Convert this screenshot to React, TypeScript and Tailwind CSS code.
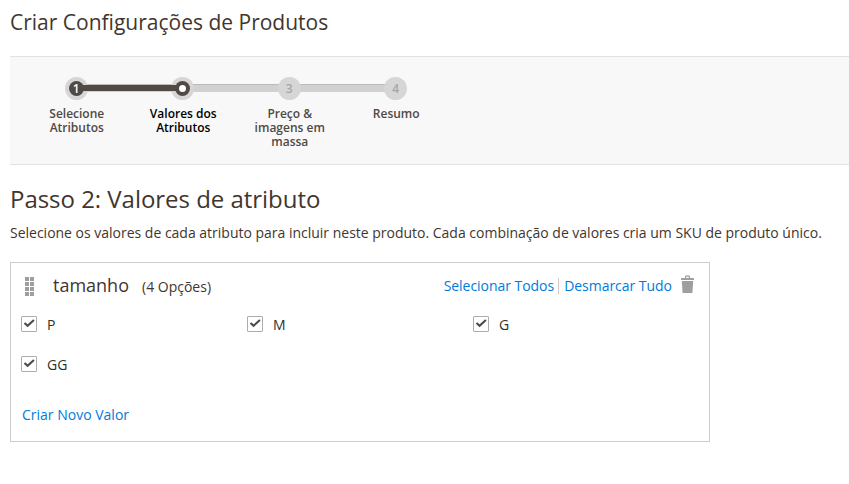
import React from 'react';

type Step = { label: string; state: 'done' | 'active' | 'todo' };

const steps: Step[] = [
  { label: 'Selecione Atributos', state: 'done' },
  { label: 'Valores dos Atributos', state: 'active' },
  { label: 'Preço & imagens em massa', state: 'todo' },
  { label: 'Resumo', state: 'todo' },
];

function StepItem({ step, index }: { step: Step; index: number }) {
  const todo = step.state === 'todo';
  return (
    <li className="relative flex w-[106.5px] flex-col items-center">
      {index > 0 && (
        <span className="absolute top-[7px] right-1/2 h-2 w-full border-t border-[#bbbbbb] bg-[#d1d1d1]" />
      )}
      <span className="relative z-10 flex size-[23px] items-center justify-center rounded-full bg-[#d6d6d6]">
        {todo ? (
          <span className="text-xs leading-none font-semibold text-[#a6a6a6]">{index + 1}</span>
        ) : (
          <span className="flex size-[15px] items-center justify-center rounded-full bg-[#514943] text-xs leading-none font-semibold text-white">
            {step.state === 'done' ? index + 1 : <span className="size-[7px] rounded-full bg-white" />}
          </span>
        )}
      </span>
      {step.state === 'active' && (
        <span className="absolute top-2 right-[60px] z-20 h-1.5 w-[93px] bg-[#514943]" />
      )}
      <span
        className={`mt-[7px] ml-px w-[80px] text-center text-xs leading-[14px] font-semibold ${
          step.state === 'active' ? 'text-black' : 'text-[#514943]'
        }`}
      >
        {step.label}
      </span>
    </li>
  );
}

function Option({ label }: { label: string }) {
  return (
    <label className="flex h-4 w-[226px] items-center">
      <span className="flex size-4 items-center justify-center rounded-[1px] border border-[#adadad] bg-white">
        <svg width="12" height="10" viewBox="0 0 12 10" fill="none">
          <path d="M1.5 3.9 4.6 6.8 10.9 1" stroke="#514943" strokeWidth="2.1" />
        </svg>
      </span>
      <span className="mt-px ml-[10px] text-sm leading-none text-[#303030]">{label}</span>
    </label>
  );
}

export default function App() {
  return (
    <main className="h-[484px] overflow-hidden bg-white pl-[10px] font-['Open_Sans',sans-serif] text-[#41362f]">
      <h1 className="pt-[7px] text-[21px] leading-[30px]">Criar Configurações de Produtos</h1>

      <nav className="mt-[19px] h-[109px] border-y border-[#e3e3e3] bg-[#f8f8f8] pt-5 pl-[13px]">
        <ol className="flex">
          {steps.map((step, i) => (
            <StepItem key={step.label} step={step} index={i} />
          ))}
        </ol>
      </nav>

      <h2 className="mt-[18px] text-2xl leading-8 tracking-[-0.03px]">Passo 2: Valores de atributo</h2>
      <p className="mt-2 text-sm leading-5 tracking-[-0.008px] whitespace-nowrap">
        Selecione os valores de cada atributo para incluir neste produto. Cada combinação de valores cria um SKU de produto único.
      </p>

      <section className="mt-[19px] h-[180px] w-[700px] border border-[#cccccc] pl-[10px]">
        <header className="flex h-[46px] items-center">
          <div className="ml-1 grid grid-cols-[4px_4px] gap-px">
            {Array.from({ length: 8 }, (_, i) => (
              <span key={i} className="size-1 bg-[#9e9e9e]" />
            ))}
          </div>
          <span className="-mt-0.5 ml-[19px] text-lg leading-none">tamanho</span>
          <span className="mt-px ml-[13px] text-sm leading-none">(4 Opções)</span>
          <div className="mr-[15px] ml-auto flex items-center text-sm leading-none text-[#007bdb]">
            <a className="tracking-[-0.04px]">Selecionar Todos</a>
            <span className="ml-1 h-4 w-px bg-[#cccccc]" />
            <a className="ml-[5px] tracking-[-0.03px]">Desmarcar Tudo</a>
            <svg className="-mt-1 ml-[9px]" width="13" height="19" viewBox="0 0 13 19" fill="#9e9e9e">
              <path d="M4 3V1.5Q4 .5 5 .5H8Q9 .5 9 1.5V3H12Q13 3 13 4V5H0V4Q0 3 1 3ZM5.2 3H7.8V1.7H5.2ZM.8 6H12.2L11.4 18H1.6Z" />
            </svg>
          </div>
        </header>
        <div className="mt-[7px] flex flex-wrap gap-y-6">
          <Option label="P" />
          <Option label="M" />
          <Option label="G" />
          <Option label="GG" />
        </div>
        <a className="mt-[33px] ml-px block text-sm leading-5 text-[#007bdb]">Criar Novo Valor</a>
      </section>
    </main>
  );
}
